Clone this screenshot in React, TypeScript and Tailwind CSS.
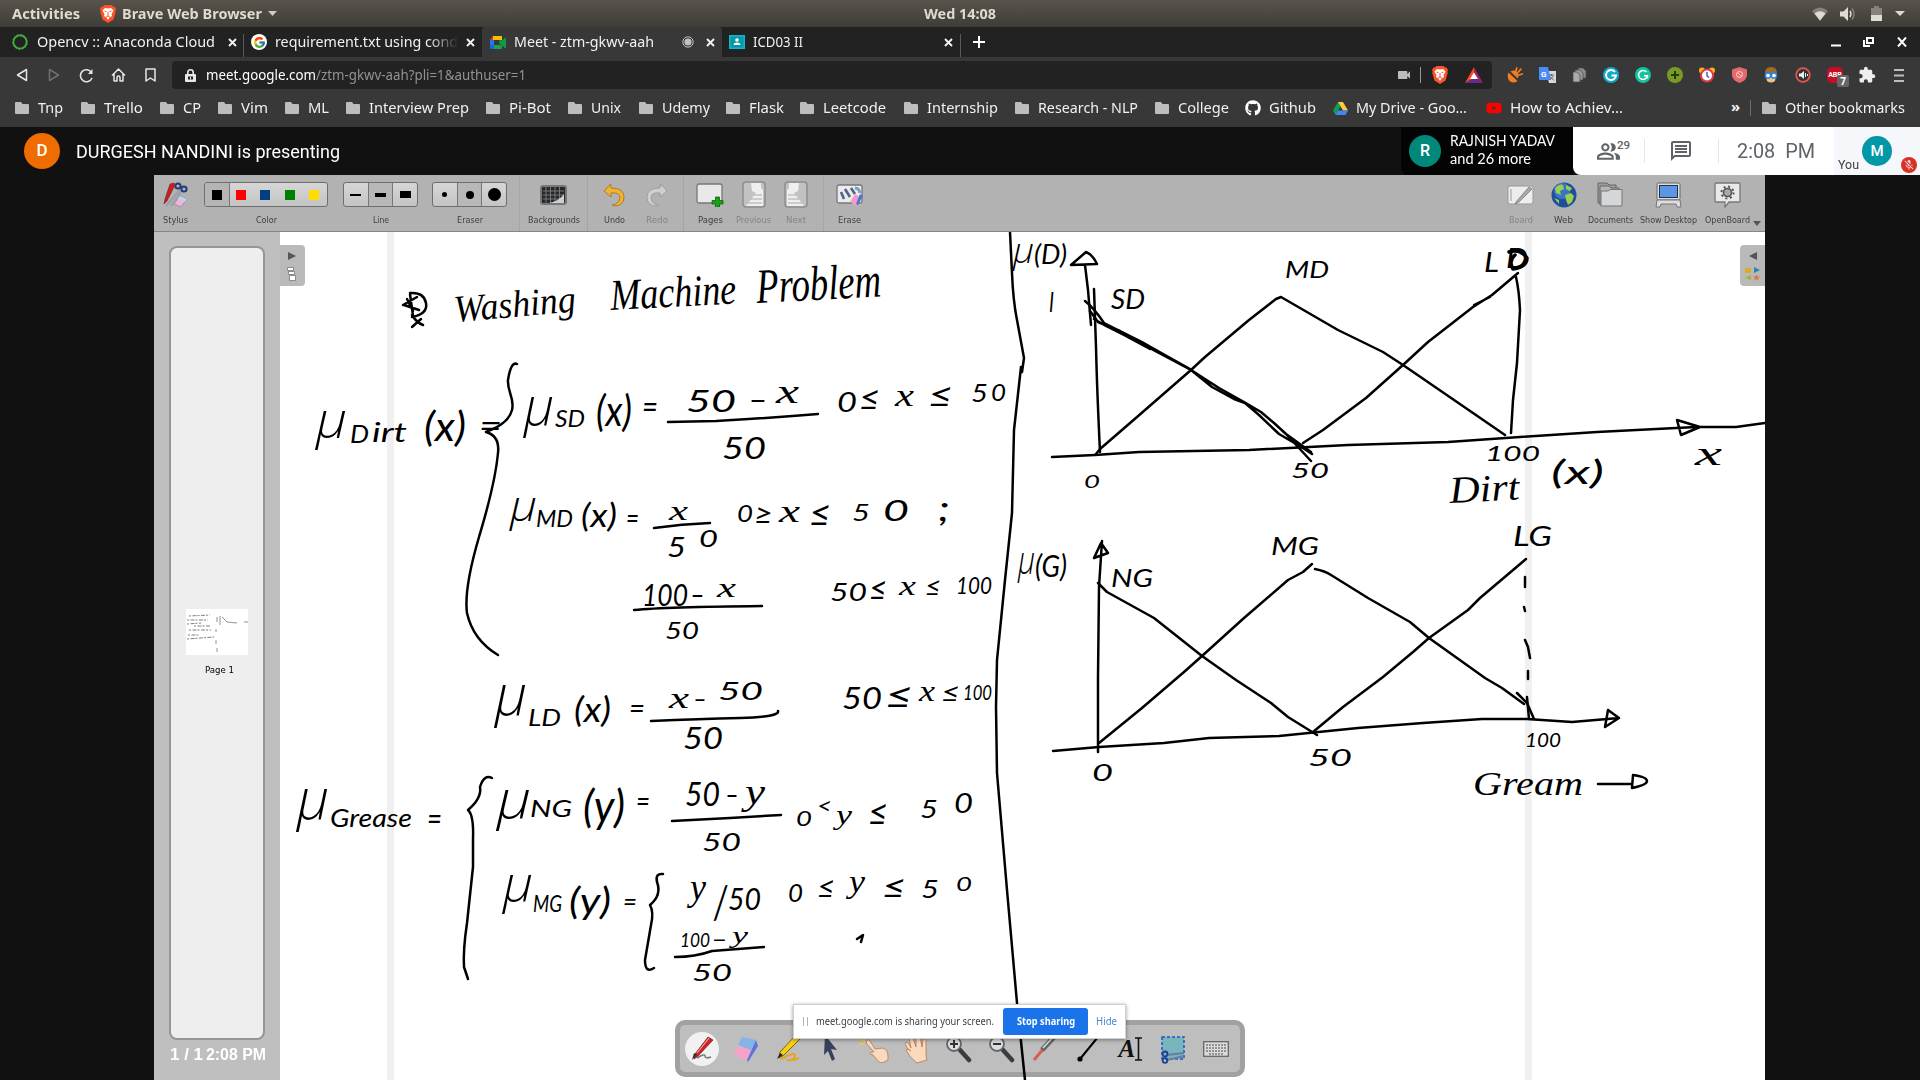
import { useLayoutEffect, useRef, type ReactNode } from "react";
import { FcGoogle } from "react-icons/fc";
import { FaGithub, FaYoutube } from "react-icons/fa";
import { MdExtension, MdMicOff, MdOutlineMessage, MdOutlinePeopleAlt, MdVideocam } from "react-icons/md";

/* Text squeezed or widened to an exact width. */
function Fit({ w, children, className = "" }: { w: number; children: ReactNode; className?: string }) {
  const ref = useRef<HTMLSpanElement>(null);
  useLayoutEffect(() => {
    const el = ref.current;
    if (el && el.offsetWidth) el.style.transform = `scaleX(${w / el.getBoundingClientRect().width})`;
  }, [w]);
  return (
    <span className={`inline-block shrink-0 whitespace-nowrap ${className}`} style={{ width: w }}>
      <span ref={ref} className="inline-block origin-left whitespace-nowrap">
        {children}
      </span>
    </span>
  );
}

function Folder() {
  return (
    <svg width="14" height="12" viewBox="0 0 14 12" className="shrink-0">
      <path d="M1 0h5l1.500 2H13a1 1 0 0 1 1 1v8a1 1 0 0 1-1 1H1a1 1 0 0 1-1-1V1a1 1 0 0 1 1-1z" fill="#bdbdbd" />
    </svg>
  );
}

function Lion({ className = "" }: { className?: string }) {
  return (
    <svg width="16" height="18" viewBox="0 0 16 18" className={`shrink-0 ${className}`}>
      <path d="M4.500 0h7l1.500 1.500h1.500L16 4l-.7 1.500.4 1.500-2.200 7.500L8 18l-5.500-3.500L.3 7l.4-1.500L0 4l1.500-2.500H3z" fill="#fb542b" />
      <path d="M5 3l3 .6L11 3l2.500 2.500-2 3.500.5 2-2.500 1.500L8 15l-1.500-2.500L4 11l.5-2-2-3.500z" fill="#fff" />
      <path d="M4.500 6l2 .8M11.500 6l-2 .8M8 7v4M6.200 12L8 11l1.800 1" stroke="#fb542b" strokeWidth="1" fill="none" />
    </svg>
  );
}

function Cross({ className = "" }: { className?: string }) {
  return (
    <svg width="9" height="9" viewBox="0 0 9 9" className={`shrink-0 ${className}`}>
      <path d="M1 1l7 7M8 1L1 8" stroke="#f2f2f2" strokeWidth="1.900" />
    </svg>
  );
}

function TopBar() {
  return (
    <div className="flex h-[27px] items-center bg-gradient-to-b from-[#58544b] to-[#3f3d38] text-[15px] font-bold text-[#dedbd2]">
      <Fit w={68} className="ml-3 pb-px">Activities</Fit>
      <Lion className="ml-[20px]" />
      <Fit w={140} className="ml-[6px] pb-px">Brave Web Browser</Fit>
      <svg width="9" height="5" viewBox="0 0 9 5" className="ml-[6px]"><path d="M0 0h9L4.500 5z" fill="#cfccc4" /></svg>
      <Fit w={72} className="ml-[647px] pb-px">Wed 14:08</Fit>
      <div className="ml-auto flex items-center pr-[15px]">
        <svg width="16" height="14" viewBox="0 0 16 14">
          <path d="M0 4Q8-3 16 4L8 14z" fill="#85827b" />
          <path d="M2.500 6.500Q8 2 13.500 6.500L8 13.500z" fill="#dedbd5" />
        </svg>
        <svg width="16" height="14" viewBox="0 0 16 14" className="ml-[12px]">
          <path d="M0 4.500h3.500L8 0v14L3.500 9.500H0z" fill="#dedbd5" />
          <path d="M10 4q2 3 0 6" stroke="#dedbd5" strokeWidth="1.500" fill="none" />
          <path d="M12 1.500q4 5.500 0 11" stroke="#85827b" strokeWidth="1.500" fill="none" />
        </svg>
        <svg width="11" height="15" viewBox="0 0 11 15" className="ml-[15px]">
          <path d="M3 0h5v2h3v13H0V2h3z" fill="#85827b" />
          <path d="M0 9h11v6H0z" fill="#dedbd5" />
        </svg>
        <svg width="10" height="5" viewBox="0 0 10 5" className="ml-[13px]"><path d="M0 0h10L5 5z" fill="#dedbd5" /></svg>
      </div>
    </div>
  );
}

function TabStrip() {
  return (
    <div className="flex h-[30px] items-center bg-[#222222] text-[15px] text-[#f1f1f1]">
      <div className="flex h-full w-[243px] items-center">
        <svg width="18" height="18" viewBox="0 0 18 18" className="ml-[11px]">
          <circle cx="9" cy="9" r="6.800" fill="none" stroke="#3fae3f" strokeWidth="2.200" />
          <circle cx="9" cy="9" r="7.800" fill="none" stroke="#222222" strokeWidth="1" strokeDasharray="1.500 2" />
        </svg>
        <Fit w={178} className="ml-[8px] pb-[2px]">Opencv :: Anaconda Cloud</Fit>
        <Cross className="ml-[13px]" />
      </div>
      <div className="flex h-full w-[239px] items-center">
        <span className="h-[23px] w-px self-end bg-[#5a5a5a]" />
        <span className="ml-[7px] flex h-4 w-4 items-center justify-center rounded-full bg-white"><FcGoogle size={13} /></span>
        <span className="ml-[8px] overflow-hidden pb-[2px] [mask-image:linear-gradient(to_right,black_84%,transparent)]">
          <Fit w={183}>requirement.txt using cond</Fit>
        </span>
        <Cross className="ml-[8px]" />
      </div>
      <div className="flex h-[30px] w-[240px] items-center rounded-t-[3px] bg-[#383838]">
        <svg width="16" height="13" viewBox="0 0 16 13" className="ml-[8px]">
          <path d="M3 0v4H0z" fill="#e53935" /><path d="M3 0h9v4H3z" fill="#fbbc04" /><path d="M0 4h4v5H0z" fill="#2274f0" />
          <path d="M0 9h4v4H1a1 1 0 0 1-1-1z" fill="#1967d2" /><path d="M4 9h5l3 1v2a1 1 0 0 1-1 1H4z" fill="#18a84c" />
          <path d="M9 4h3v6L9 8z" fill="#188038" /><path d="M10 6l5-4h1v10h-1l-5-4z" fill="#159947" />
        </svg>
        <Fit w={140} className="ml-[8px] pb-[2px]">Meet - ztm-gkwv-aah</Fit>
        <svg width="12" height="12" viewBox="0 0 12 12" className="ml-[28px]">
          <circle cx="6" cy="6" r="5.200" fill="none" stroke="#bfc2c9" /><circle cx="6" cy="6" r="3.600" fill="#bfc2c9" />
        </svg>
        <Cross className="ml-[12px]" />
      </div>
      <div className="flex h-full w-[239px] items-center">
        <svg width="16" height="14" viewBox="0 0 16 14" className="ml-[7px]">
          <rect width="16" height="14" fill="#12b5cb" /><rect x="1.500" y="1.500" width="13" height="11" fill="#0797a8" />
          <circle cx="8" cy="5" r="1.800" fill="#fff" /><path d="M4.500 10q0-2.500 3.500-2.500t3.500 2.500z" fill="#fff" />
        </svg>
        <Fit w={50} className="ml-[8px] pb-[2px]">ICD03 II</Fit>
        <Cross className="ml-auto mr-[7px]" />
        <span className="h-[23px] w-px self-end bg-[#5a5a5a]" />
      </div>
      <svg width="12" height="12" viewBox="0 0 12 12" className="ml-[12px]"><path d="M6 0v12M0 6h12" stroke="#fff" strokeWidth="2" /></svg>
      <div className="ml-auto flex items-center pr-[13px]">
        <svg width="10" height="10" viewBox="0 0 10 10"><path d="M0 8.500h10" stroke="#fff" strokeWidth="2" /></svg>
        <svg width="11" height="10" viewBox="0 0 11 10" className="ml-[22px]">
          <path d="M4 1h6v5H4zM1 3v6h6" fill="none" stroke="#fff" strokeWidth="2" />
        </svg>
        <svg width="10" height="10" viewBox="0 0 10 10" className="ml-[23px]"><path d="M1 .5l8 9M9 .5l-8 9" stroke="#fff" strokeWidth="2" /></svg>
      </div>
    </div>
  );
}

function Ext({ children }: { children: ReactNode }) {
  return <span className="flex w-[32px] shrink-0 items-center justify-center">{children}</span>;
}

function AddressBar() {
  return (
    <div className="flex h-[36px] items-center bg-[#383838] text-[15px]">
      <div className="flex w-[172px] items-center pl-[6px]">
        <Ext><svg width="12" height="14" viewBox="0 0 12 14"><path d="M10.500 1.500v11L1.500 7z" fill="none" stroke="#e6e6e6" strokeWidth="1.500" strokeLinejoin="round" /></svg></Ext>
        <Ext><svg width="12" height="14" viewBox="0 0 12 14"><path d="M1.500 1.500v11l9-5.500z" fill="none" stroke="#6f6f6f" strokeWidth="1.500" strokeLinejoin="round" /></svg></Ext>
        <Ext><svg width="15" height="15" viewBox="0 0 15 15"><path d="M12.500 4.500A6 6 0 1 0 13 10" fill="none" stroke="#e6e6e6" strokeWidth="1.600" /><path d="M13.500 1v5H9z" fill="#e6e6e6" /></svg></Ext>
        <Ext><svg width="15" height="14" viewBox="0 0 15 14"><path d="M1 7.500L7.500 1 14 7.500M3 6v7h3V9.500a1.500 1.500 0 0 1 3 0V13h3V6" fill="none" stroke="#e6e6e6" strokeWidth="1.500" strokeLinejoin="round" /></svg></Ext>
        <Ext><svg width="11" height="14" viewBox="0 0 11 14"><path d="M1 1h9v12l-4.500-3L1 13z" fill="none" stroke="#e6e6e6" strokeWidth="1.500" strokeLinejoin="round" /></svg></Ext>
      </div>
      <div className="flex h-[28px] w-[1320px] items-center rounded-[4px] bg-[#222222]">
        <svg width="11" height="13" viewBox="0 0 11 13" className="ml-[13px]">
          <path d="M2.800 5.500V3.500a2.700 2.700 0 0 1 5.400 0v2" fill="none" stroke="#e8e8e8" strokeWidth="1.600" />
          <rect y="5" width="11" height="8" rx="1" fill="#e8e8e8" /><path d="M3 7.500h5v3H3z" fill="#222222" /><path d="M5 8h1v2.500H5z" fill="#e8e8e8" />
        </svg>
        <Fit w={110} className="ml-[10px] pb-px text-white">meet.google.com</Fit>
        <Fit w={210} className="pb-px text-[#929292]">/ztm-gkwv-aah?pli=1&amp;authuser=1</Fit>
        <MdVideocam size={16} className="ml-auto text-[#bdbdbd]" />
        <span className="ml-[8px] h-4 w-px bg-[#9a9a9a]" />
        <Lion className="ml-[11px]" />
        <svg width="18" height="16" viewBox="0 0 18 16" className="mx-[17px] mr-[9px]">
          <path d="M9 0L0 16l9-5z" fill="#ff4724" /><path d="M9 0l9 16-9-5z" fill="#9e1f63" /><path d="M0 16h18l-9-5z" fill="#662d91" /><path d="M9 5.500l4 6.500H5z" fill="#fff" />
        </svg>
      </div>
      <div className="flex items-center pl-[7px]">
        <Ext>
          <svg width="16" height="16" viewBox="0 0 16 16">
            <path d="M1.500 5.500l9 8.500q-4 3-8 0-3-4-1-8.500z" fill="#f57c1f" /><path d="M3.500 4.500q4-2 6.500.500t.8 6.500z" fill="#f57c1f" />
            <path d="M9 4l.8-3M11 5.500l2.800-3.300M12 8l3.500-1" stroke="#f57c1f" strokeWidth="1.800" strokeLinecap="round" />
          </svg>
        </Ext>
        <Ext>
          <svg width="17" height="17" viewBox="0 0 17 17"><path d="M7 4h10v12H10z" fill="#d5d8dc" /><path d="M0 0h9l3 13H1a1 1 0 0 1-1-1z" fill="#4c8bf5" /><path d="M10 8h5M12.500 7v2M14.500 9l-4 4M11 9.500l4 4" stroke="#5f6368" fill="none" /><text x="2" y="10" fontSize="8" fontWeight="700" fill="#fff" fontFamily="Roboto, sans-serif">G</text></svg>
        </Ext>
        <Ext><svg width="15" height="16" viewBox="0 0 15 16"><path d="M6 1h5l3 3v7H6z" fill="#8b8b8b" stroke="#4c4c4c" strokeWidth=".7" /><path d="M3 3h5l3 3v7H3z" fill="#999" stroke="#4c4c4c" strokeWidth=".7" /><path d="M1 5h4l3 3v7H1z" fill="#aaa" stroke="#4c4c4c" strokeWidth=".7" /></svg></Ext>
        <Ext>
          <svg width="16" height="16" viewBox="0 0 16 16"><circle cx="8" cy="8" r="8" fill="#11a9c6" /><path d="M12 5a5 5 0 1 0 1 3.500H8.500" fill="none" stroke="#fff" strokeWidth="1.900" /></svg>
        </Ext>
        <Ext>
          <svg width="16" height="16" viewBox="0 0 16 16"><circle cx="8" cy="8" r="8" fill="#15c39a" /><path d="M11.500 5A4.500 4.500 0 1 0 12.500 8.700H9M12.500 8.500v3" fill="none" stroke="#fff" strokeWidth="1.500" /></svg>
        </Ext>
        <Ext><svg width="16" height="16" viewBox="0 0 16 16"><circle cx="8" cy="8" r="8" fill="#799b25" /><path d="M8 4v8M4 8h8" stroke="#2a3a05" strokeWidth="2" /></svg></Ext>
        <Ext><svg width="16" height="16" viewBox="0 0 16 16"><circle cx="3" cy="3.500" r="3" fill="#fbb417" /><circle cx="13" cy="3.500" r="3" fill="#fbb417" /><circle cx="8" cy="8.500" r="6" fill="#fff" stroke="#e53946" strokeWidth="2" /><path d="M8 5v4l2 1.500" stroke="#3949ab" strokeWidth="1.300" fill="none" /></svg></Ext>
        <Ext><svg width="15" height="16" viewBox="0 0 15 16"><path d="M7.500 0L15 2.500V8q0 5-7.500 8Q0 13 0 8V2.500z" fill="#e8696c" /><circle cx="7.500" cy="7.500" r="3" fill="none" stroke="#fbd5d5" /><path d="M5.500 5.500l4 4" stroke="#fbd5d5" /></svg></Ext>
        <Ext><svg width="16" height="16" viewBox="0 0 16 16"><path d="M2 6q0-6 6-6t6 6l-1 7q-5 4-10 0z" fill="#a2692a" /><path d="M4 9h8v5q-4 3-8 0z" fill="#f2c08a" /><circle cx="5" cy="8.500" r="2.600" fill="#fff" stroke="#1e88e5" strokeWidth="1.500" /><circle cx="11" cy="8.500" r="2.600" fill="#fff" stroke="#1e88e5" strokeWidth="1.500" /></svg></Ext>
        <Ext><svg width="16" height="16" viewBox="0 0 16 16"><circle cx="8" cy="8" r="6.800" fill="#333" stroke="#e2574c" strokeWidth="1.800" /><path d="M4 6.500h2L9 4v8L6 9.500H4z" fill="#eee" /><path d="M10.500 6v4M12.500 7v2" stroke="#eee" /></svg></Ext>
        <span className="relative flex w-[32px] justify-center">
          <span className="flex h-4 w-[16px] items-center justify-center rounded-[5px] bg-[#c70d24] font-[Roboto,sans-serif] text-[7px] font-bold text-white">ABP</span>
          <span className="absolute left-[18px] top-[8px] flex h-[12px] w-[12px] items-center justify-center rounded-[2px] bg-[#666] text-[10px] font-bold text-white">7</span>
        </span>
        <Ext><MdExtension size={18} className="text-[#eeeeee]" /></Ext>
        <Ext><svg width="10" height="13" viewBox="0 0 10 13"><path d="M0 1h10M0 6.500h10M0 12h10" stroke="#bdbdbd" strokeWidth="2" /></svg></Ext>
      </div>
    </div>
  );
}

const bookmarks: [string, number, number][] = [
  ["Tnp", 66, 25], ["Trello", 79, 39], ["CP", 58, 18], ["Vim", 67, 27], ["ML", 61, 21], ["Interview Prep", 140, 100],
  ["Pi-Bot", 82, 42], ["Unix", 71, 30], ["Udemy", 87, 48], ["Flask", 74, 35], ["Leetcode", 104, 63],
  ["Internship", 111, 71], ["Research - NLP", 140, 100], ["College", 90, 51],
];

function Bookmarks() {
  return (
    <div className="flex h-[34px] items-center bg-[#383838] pb-[4px] pl-[15px] text-[15px] text-[#f1f1f1]">
      {bookmarks.map(([label, pitch, w]) => (
        <span key={label} className="flex shrink-0 items-center gap-[9px]" style={{ width: pitch }}>
          <Folder />
          <Fit w={w} className="pb-[2px]">{label}</Fit>
        </span>
      ))}
      <FaGithub size={16} className="text-white" />
      <Fit w={47} className="ml-[8px] pb-[2px]">Github</Fit>
      <svg width="15" height="13" viewBox="0 0 15 13" className="ml-[17px]">
        <path d="M5 0L0 8.500 2.500 13l5-8.500z" fill="#0f9d58" /><path d="M5 0h5l5 8.500h-5z" fill="#ffcd40" /><path d="M2.500 13h10L15 8.500H5z" fill="#4285f4" />
      </svg>
      <Fit w={111} className="ml-[8px] pb-[2px]">My Drive - Goo…</Fit>
      <FaYoutube size={16} className="ml-[19px] text-[#ff0000]" />
      <Fit w={113} className="ml-[8px] pb-[2px]">How to Achiev…</Fit>
      <span className="ml-[108px] pb-[3px] font-bold">»</span>
      <span className="ml-auto h-4 w-px bg-[#6d6d6d]" />
      <span className="ml-[11px]"><Folder /></span>
      <Fit w={120} className="ml-[9px] mr-[15px] pb-[2px]">Other bookmarks</Fit>
    </div>
  );
}

function MeetHeader() {
  return (
    <div className="flex h-[48px] shrink-0 items-center bg-[#111111] font-[Roboto,sans-serif] text-white">
      <span className="ml-[24px] flex h-[36px] w-[36px] items-center justify-center rounded-full bg-[#ef6c00] text-[17px] font-medium">D</span>
      <Fit w={264} className="ml-[16px] text-[18px]">DURGESH NANDINI is presenting</Fit>
      <div className="ml-auto flex h-full w-[172px] items-center rounded-bl-[8px] bg-[#040404] pl-[8px]">
        <span className="flex h-[32px] w-[32px] items-center justify-center rounded-full bg-[#00897b] text-[16px] font-medium">R</span>
        <span className="ml-[9px] flex flex-col pb-[2px] font-[Lato,sans-serif] text-[14.500px] leading-[18px]">
          <Fit w={105}>RAJNISH YADAV</Fit>
          <Fit w={81}>and 26 more</Fit>
        </span>
      </div>
      <div className="flex h-full w-[347px] items-center rounded-bl-[8px] bg-white text-[#5f6368]">
        <MdOutlinePeopleAlt size={25} className="ml-[23px]" />
        <span className="mb-[11px] ml-[-4px] text-[11.500px] font-medium">29</span>
        <span className="ml-[14px] h-6 w-px bg-[#e4e6e8]" />
        <MdOutlineMessage size={24} className="ml-[24px]" />
        <span className="ml-[25px] h-6 w-px bg-[#e4e6e8]" />
        <Fit w={78} className="ml-[18px] text-[20px]">2:08&nbsp; PM</Fit>
        <div className="relative ml-auto h-full w-[86px] bg-[#f5f7fa]">
          <Fit w={21} className="absolute bottom-[1px] left-[4px] text-[12px] text-[#3c4043]">You</Fit>
          <span className="absolute left-[28px] top-[9px] flex h-[30px] w-[30px] items-center justify-center rounded-full bg-[#0097a7] text-[15px] font-medium text-white">M</span>
          <span className="absolute bottom-[2px] right-[3px] flex h-[16px] w-[16px] items-center justify-center rounded-full bg-[#d93025]"><MdMicOff size={12} className="text-[#f9d0cc]" /></span>
        </div>
      </div>
    </div>
  );
}

function Tool({ label, lw, className, dim = false, children }: { label: string; lw: number; className: string; dim?: boolean; children: ReactNode }) {
  return (
    <div className={`flex h-full shrink-0 flex-col items-center ${className}`}>
      <span className="flex h-[37px] items-center justify-center">{children}</span>
      <Fit w={lw} className={`text-[9.500px] leading-[13px] ${dim ? "text-[#858585]" : "text-[#404040]"}`}>{label}</Fit>
    </div>
  );
}

function Divider({ className = "" }: { className?: string }) {
  return <span className={`h-[55px] w-px border-l border-dotted border-[#999] ${className}`} />;
}

function BoardToolbar() {
  const group = "flex h-[25px] items-stretch overflow-hidden rounded-[3px] border border-[#6e6e6e] bg-gradient-to-b from-[#d6d6d6] via-[#cdcdcd] to-[#c4c4c4]";
  const cell = "flex flex-1 items-center justify-center border-r border-[#777777] last:border-r-0";
  return (
    <div className="flex h-[57px] border-b border-[#868686] bg-[#b2b2b2] pt-px font-['DejaVu_Sans',sans-serif]">
      <Tool label="Stylus" lw={25} className="w-[42px]">
        <svg width="26" height="26" viewBox="0 0 26 26">
          <path d="M18 8L4 24M19 10L9 24" stroke="#9aa0a8" strokeWidth="2" />
          <circle cx="16" cy="4" r="2.600" fill="none" stroke="#223c7a" strokeWidth="2" /><circle cx="22" cy="7" r="2.600" fill="none" stroke="#223c7a" strokeWidth="2" />
          <path d="M8 2l4-1 1 2-8 16-3 3 1-5z" fill="#c91d22" stroke="#7b2020" strokeWidth=".6" />
          <path d="M18 14l7 3-6 8-7-3z" fill="#efb4d5" stroke="#9b7ba8" strokeWidth=".7" /><path d="M18 14l7 3-2.500 3-7-3z" fill="#b9d3ef" />
        </svg>
      </Tool>
      <Tool label="Color" lw={21} className="ml-[8px] w-[124px]">
        <span className={`${group} w-[124px]`}>
          <span className="flex w-[25px] items-center justify-center border-r border-[#777] bg-[#b5b5b5]"><i className="h-[10px] w-[10px] bg-black" /></span>
          <span className="flex flex-1 items-center justify-between pl-[6px] pr-[8px]">
            <i className="h-[10px] w-[10px] bg-[#ff0000]" /><i className="h-[10px] w-[10px] bg-[#004080]" /><i className="h-[10px] w-[10px] bg-[#008000]" /><i className="h-[10px] w-[10px] bg-[#ffdd00]" />
          </span>
        </span>
      </Tool>
      <Tool label="Line" lw={16} className="ml-[15px] w-[75px]">
        <span className={`${group} w-[75px]`}>
          <span className={cell}><i className="h-[2px] w-[11px] bg-black" /></span>
          <span className={`${cell} bg-[#b8b8b8]`}><i className="h-[4px] w-[11px] bg-black" /></span>
          <span className={cell}><i className="h-[7px] w-[11px] bg-black" /></span>
        </span>
      </Tool>
      <Tool label="Eraser" lw={26} className="ml-[14px] w-[75px]">
        <span className={`${group} w-[75px]`}>
          <span className={cell}><i className="h-[5px] w-[5px] rounded-full bg-black" /></span>
          <span className={`${cell} bg-[#b8b8b8]`}><i className="h-[8px] w-[8px] rounded-full bg-black" /></span>
          <span className={cell}><i className="h-[13px] w-[13px] rounded-full bg-black" /></span>
        </span>
      </Tool>
      <Divider className="ml-[12px]" />
      <Tool label="Backgrounds" lw={52} className="w-[67px]">
        <svg width="27" height="20" viewBox="0 0 27 20">
          <rect x="1" y="1" width="25" height="18" rx="2" fill="#25282c" stroke="#777" strokeWidth="2" />
          <path d="M6 2v16M10.500 2v16M15 2v16M19.500 2v16M3 6h21M3 10h21M3 14h21" stroke="#888" strokeWidth=".8" /><path d="M9 18q10-2 15-9v9z" fill="#cfcfcf" />
        </svg>
      </Tool>
      <Divider />
      <Tool label="Undo" lw={21} className="w-[52px]">
        <svg width="22" height="24" viewBox="0 0 22 24"><path d="M7.500 1L1 8l7 6V10q9-1 9 5 0 4-5 6.500l-3 .5 2 1q10 0 10-9T8 5z" fill="#f1b233" stroke="#a66f11" strokeWidth=".8" /></svg>
      </Tool>
      <Tool label="Redo" lw={22} className="w-[34px]" dim>
        <svg width="22" height="24" viewBox="0 0 22 24"><path d="M14.500 1L21 8l-7 6V10q-9-1-9 5 0 4 5 6.500l3 .5-2 1Q1 23 1 14T14 5z" fill="#cfcfcf" stroke="#969696" strokeWidth=".8" /></svg>
      </Tool>
      <Divider className="ml-[9px]" />
      <Tool label="Pages" lw={25} className="w-[52px]">
        <svg width="28" height="24" viewBox="0 0 28 24"><rect x="1" y="1" width="25" height="19" rx="2" fill="#e9e9e9" stroke="#777" strokeWidth="1.300" /><path d="M19.500 14h4v3.500H27v3.500h-3.500v3h-4v-3H16v-3.500h3.500z" fill="#15a315" stroke="#0a650a" strokeWidth=".8" /></svg>
      </Tool>
      <Tool label="Previous" lw={35} className="w-[35px]" dim>
        <svg width="24" height="27" viewBox="0 0 24 27"><rect x="1" y="1" width="22" height="25" rx="3" fill="#c2c2c2" stroke="#8d8d8d" strokeWidth="1.500" /><path d="M9 2h10v5l2 2v16H4l6-8 4-5-4-2z" fill="#efefef" /><path d="M12 14h8M9 18h11M6 22h14" stroke="#a9a9a9" /></svg>
      </Tool>
      <Tool label="Next" lw={20} className="w-[50px]" dim>
        <svg width="24" height="27" viewBox="0 0 24 27"><rect x="1" y="1" width="22" height="25" rx="3" fill="#c2c2c2" stroke="#8d8d8d" strokeWidth="1.500" /><path d="M15 2H5v5L3 9v16h17l-6-8-4-5 4-2z" fill="#efefef" /><path d="M4 14h8M4 18h11M4 22h14" stroke="#a9a9a9" /></svg>
      </Tool>
      <Divider className="ml-[2px]" />
      <Tool label="Erase" lw={23} className="w-[50px]">
        <svg width="27" height="24" viewBox="0 0 27 24"><rect x="1" y="2" width="25" height="18" rx="2" fill="#ececec" stroke="#777" strokeWidth="1.300" /><path d="M5 9l3 7M9 6l5 8M15 5l4 6" stroke="#53648c" strokeWidth="2.600" fill="none" /><path d="M19 5q4 0 5 5" stroke="#7f9fc4" strokeWidth="3" fill="none" /><path d="M19 11l7 4-6 8-6-4z" fill="#f19cc8" /><path d="M24 11l3 2-5 9-2-1z" fill="#4576d8" /></svg>
      </Tool>
      <div className="ml-auto flex pr-px">
        <Tool label="Board" lw={24} className="w-[43px]" dim>
          <svg width="27" height="22" viewBox="0 0 27 22"><rect x="1" y="2" width="25" height="18" rx="2" fill="#ededed" stroke="#999" /><path d="M4 5v12" stroke="#999" /><path d="M9 18L22 3l3 2L12 18l-4 2z" fill="#aaa" stroke="#777" strokeWidth=".8" /></svg>
        </Tool>
        <Tool label="Web" lw={19} className="w-[43px]">
          <svg width="26" height="26" viewBox="0 0 26 26"><circle cx="13" cy="13" r="12.500" fill="#1d4f9e" /><circle cx="11" cy="9" r="8" fill="#4b8edb" opacity=".6" /><path d="M4 6q5-5 8-3l1 4-4 2 1 4-5-2zM14 13l6-2 3 3-2 6-4 3-2-5zM15 3l6 3-2 3-4-2zM3 16l5 2v4z" fill="#9ccf4e" /></svg>
        </Tool>
        <Tool label="Documents" lw={45} className="w-[50px]">
          <svg width="28" height="25" viewBox="0 0 28 25"><path d="M2 1h9l2 2h7v18H2z" fill="#9c9ea1" stroke="#666" /><path d="M4 4h9l2 2h8v17H4z" fill="#b4b6b9" stroke="#666" /><path d="M5 9h7l2-1.500h12V24H5z" fill="#d5d6da" stroke="#777" /></svg>
        </Tool>
        <Tool label="Show Desktop" lw={57} className="w-[66px]">
          <svg width="27" height="26" viewBox="0 0 27 26"><rect x="2" y="1" width="23" height="17" rx="1.500" fill="#ddd" stroke="#666" /><rect x="4.500" y="3.500" width="18" height="12" fill="#5b95e6" stroke="#234" /><path d="M2 18h23l1 7h-4l-1-3H6l-1 3H1z" fill="#ddd" stroke="#777" /></svg>
        </Tool>
        <Tool label="OpenBoard" lw={45} className="w-[52px]">
          <svg width="27" height="26" viewBox="0 0 27 26"><path d="M2 1h23a1 1 0 0 1 1 1v17a1 1 0 0 1-1 1H15l-4 5v-5H2a1 1 0 0 1-1-1V2a1 1 0 0 1 1-1z" fill="#e9e9e9" stroke="#777" strokeWidth="1.300" /><circle cx="13.500" cy="10.500" r="4" fill="#aaa" stroke="#555" strokeWidth="1.600" /><circle cx="13.500" cy="10.500" r="6" fill="none" stroke="#555" strokeWidth="2" strokeDasharray="2 2.700" /></svg>
        </Tool>
        <svg width="8" height="5" viewBox="0 0 8 5" className="mb-[5px] mr-[3px] mt-auto"><path d="M0 0h8L4 5z" fill="#555" /></svg>
      </div>
    </div>
  );
}

/* Handwritten symbols: text, left, top, right, baseline. */
type Mark = [string, number, number, number, number];

const marks: Mark[] = [
  ["D", 350, 425, 369, 443], ["irt", 372, 423, 407, 442],
  ["(x)", 424, 412, 466, 441], ["=", 479, 413, 502, 438],
  ["SD", 555, 411, 585, 427], ["(x)", 596, 395, 632, 426], ["=", 642, 394, 658, 418],
  ["50", 686, 390, 736, 412], ["–", 748, 388, 768, 410], ["50", 722, 437, 766, 459],
  ["0", 837, 392, 857, 412], ["≤", 859, 385, 880, 410], ["≤", 928, 382, 953, 407], ["5", 971, 384, 988, 402], ["0", 991, 384, 1006, 401],
  ["MD", 536, 511, 573, 527], ["(x)", 581, 504, 617, 527], ["=", 626, 507, 639, 529],
  ["5", 667, 538, 686, 557], ["0", 699, 530, 718, 547],
  ["0", 737, 506, 753, 522], ["≥", 754, 503, 773, 524], ["≤", 809, 500, 831, 526], ["5", 852, 504, 870, 521], ["0", 883, 500, 909, 521], [";", 938, 496, 950, 521],
  ["100", 642, 584, 688, 606], ["–", 690, 583, 705, 605], ["50", 665, 622, 699, 639],
  ["50", 830, 583, 867, 601], ["≤", 869, 577, 887, 600], ["≤", 925, 576, 941, 596], ["100", 956, 577, 992, 594],
  ["LD", 528, 709, 561, 726], ["(x)", 574, 697, 611, 722], ["=", 629, 697, 645, 719],
  ["–", 693, 689, 707, 708], ["50", 718, 682, 763, 700], ["50", 683, 727, 723, 749],
  ["50", 842, 687, 882, 709], ["≤", 885, 682, 913, 708], ["≤", 941, 682, 960, 702], ["100", 963, 685, 992, 700],
  ["Grease", 330, 809, 412, 827], ["=", 427, 806, 442, 830],
  ["NG", 530, 800, 572, 817], ["(y)", 583, 790, 625, 822], ["=", 636, 790, 650, 812],
  ["50", 685, 783, 720, 806], ["–", 725, 783, 739, 805], ["50", 702, 833, 741, 851],
  ["0", 796, 811, 812, 826], ["<", 817, 798, 832, 814], ["≤", 868, 799, 888, 825], ["5", 920, 800, 938, 818], ["0", 954, 793, 973, 813],
  ["MG", 533, 895, 562, 912], ["(y)", 569, 887, 611, 914], ["=", 623, 891, 637, 911],
  ["/", 714, 884, 727, 918], ["50", 728, 888, 761, 910],
  ["0", 788, 884, 803, 902], ["≤", 817, 876, 835, 898], ["≤", 882, 875, 906, 898], ["5", 921, 880, 939, 898], ["0", 956, 877, 972, 891],
  ["100", 680, 933, 710, 947], ["–", 711, 930, 728, 948], ["50", 692, 964, 732, 981],
  ["(D)", 1034, 244, 1067, 264], ["I", 1049, 293, 1054, 312], ["SD", 1111, 290, 1145, 309], ["MD", 1285, 261, 1329, 278],
  ["L", 1484, 252, 1499, 272], ["D", 1506, 249, 1528, 268],
  ["0", 1084, 475, 1100, 488], ["50", 1291, 463, 1329, 478], ["100", 1485, 446, 1540, 461], ["(x)", 1551, 460, 1604, 484],
  ["(G)", 1035, 555, 1067, 577], ["NG", 1111, 569, 1153, 587], ["MG", 1271, 537, 1319, 555], ["LG", 1513, 527, 1552, 546],
  ["0", 1092, 765, 1113, 781], ["50", 1308, 750, 1352, 766], ["100", 1525, 733, 1561, 747],
];

/* Lowercase variables, measured by their x-height. */
const variables: Mark[] = [
  ["x", 776, 388, 799, 403], ["x", 895, 392, 914, 406], ["x", 669, 508, 688, 520], ["x", 779, 508, 800, 522],
  ["x", 717, 585, 736, 597], ["x", 899, 583, 916, 595], ["x", 669, 695, 689, 708], ["x", 919, 688, 935, 701],
  ["y", 745, 788, 765, 804], ["y", 836, 812, 852, 824], ["y", 690, 883, 706, 900], ["y", 849, 878, 865, 892],
  ["y", 732, 933, 748, 943], ["x", 1695, 450, 1722, 465],
];

/* Mu: left, top, right, baseline. */
const mus: [number, number, number, number][] = [
  [316, 410, 347, 438], [524, 395, 554, 425], [510, 497, 537, 521], [495, 683, 527, 715], [297, 787, 329, 819],
  [497, 788, 531, 818], [503, 873, 533, 902], [1013, 243, 1034, 263], [1018, 552, 1035, 574],
];

const strokes: string[] = [
  "M403 305L417 297M404 305L419 310M410 294L413 316M407 299L413 311M410 293Q424 292 426 303T412 317M412 315Q417 323 423 325M412 327L421 319",
  "M517 364Q511 361 508 380C507 392 515 398 512 410S496 428 486 432Q500 436 498 453C495 485 484 520 479 537S464 590 467 613Q473 640 498 655",
  "M492 778Q484 774 480 787Q482 798 468 810Q474 815 473 840V867Q470 895 467 923Q463 950 464 967L468 979",
  "M663 874Q655 873 657 882Q662 895 650 905Q654 912 651 925L645 960Q645 974 654 968",
  "M668 422L716 421Q770 418 818 414", "M654 528Q682 524 710 523", "M634 610Q665 607 762 606", "M651 721Q700 719 740 718T778 711",
  "M672 821L730 818 781 815", "M675 957Q695 957 712 951L764 947", "M857 939L863 935 861 942",
  "M1010 232L1012 273Q1013 300 1017 320L1024 358 1022 372M1021 367L1014 430 1012 513 1005 580 997 660 996 707 997 773 1007 890 1017 1003 1025 1080",
  "M1086 252L1071 265 1097 264Q1093 255 1086 252M1085 265L1088 290 1091 325M1094 289L1096 347Q1097 390 1100 452",
  "M1085 301Q1094 308 1104 323L1142 342 1191 370 1219 388 1244 402 1261 412 1274 423 1286 434 1311 452M1090 311L1098 322 1120 331M1094 319L1106 326 1142 344 1191 370 1212 387 1234 399 1245 403 1259 415 1279 434 1303 448 1312 454M1124 335L1150 349M1140 341L1190 369M1286 434L1311 461",
  "M1096 454L1100 449 1137 417 1191 370 1205 357 1249 320 1276 299 1281 297 1338 330 1383 352 1403 365 1473 413 1505 435",
  "M1303 443L1323 430 1366 398 1403 365 1428 342 1473 307 1492 295 1518 273M1474 305L1490 297M1516 277Q1519 290 1520 310L1517 363 1513 400 1511 433",
  "M1052 457L1095 455 1139 452 1249 450 1348 445 1448 442 1520 437 1597 432 1696 427 1736 427 1765 423M1677 420L1700 427 1681 435z",
  "M1102 541L1099 587 1098 677 1098 752M1101 543L1094 558 1108 553z",
  "M1098 583L1107 592 1154 618 1202 656 1236 680 1271 703 1288 717 1317 735",
  "M1099 743L1142 708 1184 672 1202 656 1244 618 1288 580 1303 572 1312 564M1315 569Q1325 571 1331 575L1368 598 1410 622 1429 638 1485 678 1502 688 1524 704M1517 693L1527 703 1534 719",
  "M1313 732L1343 707 1383 677 1413 652 1429 638 1468 610 1480 598 1526 559",
  "M1525 577V587M1524 607L1525 611M1525 640L1528 647 1530 658M1528 671V679M1527 697L1529 719",
  "M1053 751L1099 747 1164 743 1209 738 1279 736 1358 728 1423 723 1482 719 1527 719 1572 722 1619 718M1608 710L1619 718 1605 727z",
  "M1598 784H1632M1633 775Q1647 777 1647 781T1632 788z",
];

function Ink() {
  return (
    <svg viewBox="280 232 1485 848" className="absolute inset-0 h-full w-full" fill="#000">
      <g fill="none" stroke="#000" strokeWidth="2.500" strokeLinecap="round" strokeLinejoin="round">
        {strokes.map((d) => <path key={d} d={d} />)}
        <path d="M1509 252q11-4 18 6 0 9-14 11-5-8 2-14" strokeWidth="3.500" />
      </g>
      <g fontFamily="Lato, 'Noto Sans', sans-serif" fontStyle="italic">
        {marks.map(([t, l, top, r, b], i) => (
          <text key={i} x={l} y={b} fontSize={(b - top) / 0.72} textLength={r - l} lengthAdjust="spacingAndGlyphs">{t}</text>
        ))}
      </g>
      <g fontFamily="'Open Sans', 'Noto Sans', sans-serif" fontStyle="italic" fontWeight="300">
        {mus.map(([l, top, r, b], i) => (
          <text key={i} x={l} y={b} fontSize={(b - top) / 0.56} textLength={r - l} lengthAdjust="spacingAndGlyphs">μ</text>
        ))}
      </g>
      <g fontFamily="'Liberation Serif', serif" fontStyle="italic">
        {variables.map(([t, l, top, r, b], i) => (
          <text key={i} x={l} y={b} fontSize={(b - top) / 0.45} textLength={r - l} lengthAdjust="spacingAndGlyphs">{t}</text>
        ))}
        <text transform="translate(455 322) rotate(-5)" fontSize="38" textLength="122" lengthAdjust="spacingAndGlyphs">Washing</text>
        <text transform="translate(611 310) rotate(-3)" fontSize="44" textLength="126" lengthAdjust="spacingAndGlyphs">Machine</text>
        <text transform="translate(757 303) rotate(-3)" fontSize="49" textLength="125" lengthAdjust="spacingAndGlyphs">Problem</text>
        <text transform="translate(1450 503) rotate(-3)" fontSize="38" textLength="70" lengthAdjust="spacingAndGlyphs">Dirt</text>
        <text transform="translate(1473 795)" fontSize="34" textLength="110" lengthAdjust="spacingAndGlyphs">Gream</text>
      </g>
    </svg>
  );
}

function Slot({ children }: { children: ReactNode }) {
  return <span className="flex w-[42.800px] shrink-0 items-center justify-center">{children}</span>;
}

function Palette() {
  return (
    <div className="absolute left-[395px] top-[788px] flex h-[57px] w-[570px] items-center rounded-[10px] border-[5px] border-[#a1a1a1] bg-[#bebebe] pl-px">
      <Slot>
        <span className="flex h-[34px] w-[34px] items-center justify-center rounded-full bg-[#f1f1f1]">
          <svg width="28" height="28" viewBox="0 0 28 28"><path d="M9 23q8-5 8-2t6 1" stroke="#777" fill="none" strokeWidth="1.500" /><path d="M20 2l5 3L10 21l-4 3 1-5z" fill="#cf2026" stroke="#701518" strokeWidth=".7" /><path d="M21 3L9 18" stroke="#f2a6a6" strokeWidth="1.200" /><path d="M6 18l3 2-5 5z" fill="#333" /></svg>
        </span>
      </Slot>
      <Slot><svg width="27" height="28" viewBox="0 0 27 28"><path d="M10 2l14 3-9 20L2 21z" fill="#f6a3cb" /><path d="M10 2l14 3-5 10-13-5z" fill="#83b4e6" /><path d="M24 5l2 6-10 16-1-2z" fill="#5a76d8" /></svg></Slot>
      <Slot><svg width="28" height="28" viewBox="0 0 28 28"><path d="M7 24q15-8 14-3t-8 4q8 1 12-2" stroke="#e9a61c" fill="none" strokeWidth="2" /><path d="M22 0l5 3L10 20l-5 3 1-6z" fill="#f5cf12" stroke="#77630b" /><path d="M6 18l3 2-6 4z" fill="#222" /></svg></Slot>
      <Slot><svg width="18" height="28" viewBox="0 0 18 28"><path d="M3 0l12 15-6-1 4 10-3 2-4-10-4 4z" fill="#36425d" /></svg></Slot>
      <Slot><svg width="32" height="28" viewBox="0 0 32 28"><path d="M2 3l5 4M9 1v5M1 9h5" stroke="#f1d32d" strokeWidth="1.500" /><path d="M9 5q2-1 3 1l5 8 8-1q5 2 5 8v4q-6 4-9 2l-6-7-3-1q0-3 4-2L8 8z" fill="#fbd9bd" stroke="#b58c6c" /></svg></Slot>
      <Slot><svg width="26" height="30" viewBox="0 0 26 30"><path d="M4 14l-2-5q2-2 4 1l2 4L6 4q2-2 4 0l3 9 0-11q2-2 4 0l2 11 1-8q3-1 3 1v11q0 7 1 9l-10 3q-7-5-11-13 2-2 5 1z" fill="#fbd9bd" stroke="#b58c6c" /></svg></Slot>
      <Slot><svg width="28" height="28" viewBox="0 0 28 28"><path d="M15 15l9 10" stroke="#3c3c3c" strokeWidth="4.500" strokeLinecap="round" /><circle cx="9" cy="9" r="7" fill="#d9dde2" stroke="#666" strokeWidth="1.800" /><path d="M9 5v8M5 9h8" stroke="#333" strokeWidth="2" /></svg></Slot>
      <Slot><svg width="28" height="28" viewBox="0 0 28 28"><path d="M15 15l9 10" stroke="#3c3c3c" strokeWidth="4.500" strokeLinecap="round" /><circle cx="9" cy="9" r="7" fill="#d9dde2" stroke="#666" strokeWidth="1.800" /><path d="M5 9h8" stroke="#333" strokeWidth="2" /></svg></Slot>
      <Slot><svg width="28" height="28" viewBox="0 0 28 28"><path d="M3 25l10-12" stroke="#d6604f" strokeWidth="3" /><path d="M11 15L24 1" stroke="#666" strokeWidth="5" /><path d="M12 13L24 0" stroke="#ddd" strokeWidth="1.500" /></svg></Slot>
      <Slot><svg width="24" height="28" viewBox="0 0 24 28"><path d="M4 24L22 2" stroke="#000" strokeWidth="2" /><circle cx="4" cy="24" r="2.600" /></svg></Slot>
      <Slot>
        <span className="font-['Liberation_Serif',serif] text-[25px] font-bold italic leading-7 text-[#111]">A</span>
        <svg width="7" height="24" viewBox="0 0 7 24"><path d="M0 1h7M0 23h7M3.500 1v22" stroke="#111" strokeWidth="1.600" /></svg>
      </Slot>
      <Slot><svg width="26" height="30" viewBox="0 0 26 30"><rect x="2" y="3" width="22" height="22" fill="#78b6bd" stroke="#2451c4" strokeDasharray="3 2" strokeWidth="1.500" /><path d="M7 21l17-2M7 26l17-4" stroke="#6b7ba0" strokeWidth="2" /><circle cx="5" cy="20" r="2.500" fill="none" stroke="#1f3f94" strokeWidth="1.800" /><circle cx="5" cy="26.500" r="2.300" fill="none" stroke="#1f3f94" strokeWidth="1.800" /></svg></Slot>
      <Slot><svg width="26" height="16" viewBox="0 0 26 16"><rect x=".7" y=".7" width="24.600" height="14.600" fill="#dcdcdc" stroke="#666" strokeWidth="1.300" /><path d="M3 4h20M3 7h20M3 10h20M6 13h14" stroke="#777" strokeWidth="1.600" strokeDasharray="2 1" /></svg></Slot>
    </div>
  );
}

function ShareNotice() {
  return (
    <div className="absolute left-[513px] top-[772px] flex h-[35px] w-[333px] items-center border border-[#d0d0d0] bg-white font-['Noto_Sans',sans-serif] text-[11px] text-[#3c4043] shadow-[0_1px_4px_rgba(0,0,0,0.400)]">
      <span className="ml-[9px] h-[9px] w-[5px] border-x border-[#b5b5b5]" />
      <Fit w={178} className="ml-[8px]">meet.google.com is sharing your screen.</Fit>
      <span className="ml-[9px] flex h-[27px] w-[85px] items-center justify-center rounded-[3px] bg-[#1a73e8] text-white"><Fit w={58} className="font-bold">Stop sharing</Fit></span>
      <Fit w={21} className="ml-[8px] text-[#4a84dc]">Hide</Fit>
    </div>
  );
}

function PageThumb() {
  return (
    <svg width="62" height="46" viewBox="0 0 62 46" className="shrink-0 bg-white">
      <g stroke="#555" strokeWidth="1" strokeDasharray="2 1.500 4 1" fill="none" opacity=".75">
        <path d="M3 7l21-1M1 11h21M1 15l14-1M8 17h17M3 21h22M2 26h12M1 30l27-2" />
      </g>
      <path d="M31 8v5M34 7v9M36 8l5 5 10 1M58 13h4M30 20v3M30 31v4M31 39v4" stroke="#777" fill="none" strokeWidth=".8" />
    </svg>
  );
}

function SharedBoard() {
  return (
    <div className="ml-[154px] flex h-[905px] w-[1611px] flex-col overflow-hidden">
      <BoardToolbar />
      <div className="flex flex-1">
        <aside className="flex w-[126px] flex-col bg-[#bfbfbf] pl-[15px] pr-[11px] pt-[14px]">
          <div className="flex h-[794px] w-[96px] flex-col items-center rounded-[8px] border-2 border-[#969696] bg-[#eeeeee] pt-[361px]">
            <PageThumb />
            <Fit w={29} className="ml-[4px] mt-[9px] font-['DejaVu_Sans',sans-serif] text-[9px] text-black">Page 1</Fit>
          </div>
          <div className="mt-[3px] flex w-[96px] overflow-hidden font-['Liberation_Sans',sans-serif] text-[16px] font-bold leading-[24px] text-white">
            <Fit w={33} className="ml-px">1 / 1</Fit>
            <Fit w={60} className="ml-[3px]">2:08 PM</Fit>
          </div>
        </aside>
        <main className="relative flex-1 bg-white">
          <span className="absolute inset-y-0 left-[107px] w-[7px] bg-[#f0f0f0]" />
          <span className="absolute inset-y-0 left-[1245px] w-[7px] bg-[#f0f0f0]" />
          <div className="absolute left-0 top-[13px] flex h-[41px] w-[25px] flex-col items-center gap-[7px] rounded-r-[4px] bg-[#b9b9b9] pr-[2px] pt-[7px]">
            <svg width="8" height="8" viewBox="0 0 8 8"><path d="M0 0l8 4-8 4z" fill="#555" /></svg>
            <svg width="9" height="14" viewBox="0 0 9 14"><path d="M.5.5h6v3h-6zM1.500 4.500h6v3h-6zM2.500 8.500h6v5h-6z" fill="#fff" stroke="#777" strokeWidth=".8" /></svg>
          </div>
          <Palette />
          <Ink />
          <div className="absolute right-0 top-[13px] flex h-[41px] w-[25px] flex-col items-center gap-[7px] rounded-l-[4px] bg-[#b9b9b9] pt-[7px]">
            <svg width="8" height="8" viewBox="0 0 8 8"><path d="M8 0L0 4l8 4z" fill="#555" /></svg>
            <svg width="15" height="14" viewBox="0 0 15 14"><path d="M0 1h6v5H0z" fill="#e0a92a" /><path d="M9 0l6 3-6 3z" fill="#2a86b8" /><path d="M0 11l6-3v5z" fill="#a3b33a" /><path d="M11.500 7.500l1 2h2.500l-2 1.500 1 2.500-2.500-1.500L9 13.500l1-2.500-2-1.500h2.500z" fill="#e2763a" /></svg>
          </div>
          <ShareNotice />
        </main>
      </div>
    </div>
  );
}

export default function App() {
  return (
    <div className="h-[1080px] w-[1920px] overflow-hidden bg-[#111111] font-['Noto_Sans',sans-serif]">
      <TopBar />
      <TabStrip />
      <AddressBar />
      <Bookmarks />
      <MeetHeader />
      <SharedBoard />
    </div>
  );
}
